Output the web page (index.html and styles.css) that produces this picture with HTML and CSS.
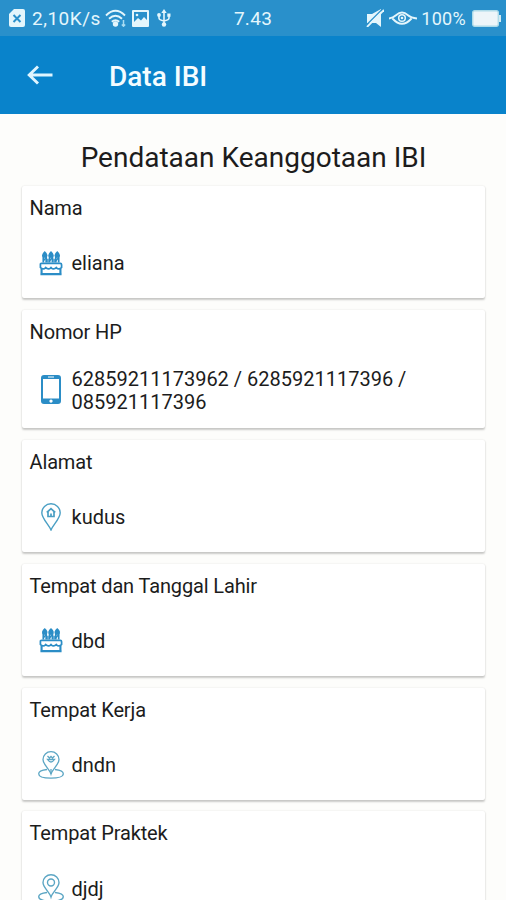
FILE: index.html
```html
<!DOCTYPE html>
<html lang="id">
<head>
<meta charset="utf-8">
<title>Data IBI</title>
<link rel="stylesheet" href="styles.css">
</head>
<body>
<svg class="defs" width="0" height="0">
  <symbol id="cake" viewBox="0 0 24 26">
    <g fill="none" stroke="currentColor" stroke-width="1.8">
      <path d="M2.200 24V18M21.800 24V18M1 24h22" stroke-width="2.200"/>
      <path d="M2.300 12.800h19.400q1.300 0 1.300 1.400v3q-2.700 3-5.500 0-2.700 3-5.500 0-2.800 3-5.500 0-2.800 3-5.500 0v-3q-.2-1.400 1.300-1.400z"/>
      <path d="M4 12V6h3v6M10.500 12V6h3v6M17 12V6h3v6"/>
      <path d="M4 10l3-3M10.500 10l3-3M17 10l3-3M8.800 12V8M15.200 12V8" stroke-width="1.500"/>
    </g>
    <path fill="currentColor" d="M5.500 0q-4.500 4-2 6.500h4q2.500-2.500-2-6.500zM12 0q-4.500 4-2 6.500h4q2.500-2.500-2-6.500zM18.500 0q-4.500 4-2 6.500h4q2.500-2.500-2-6.500z"/>
  </symbol>
  <symbol id="phone" viewBox="0 0 20 29">
    <path fill="currentColor" fill-rule="evenodd" d="M3 0h14q3 0 3 3v23q0 3-3 3H3q-3 0-3-3V3q0-3 3-3zM2 4v19.500h16V4zM7 1.600v1h6v-1zM10 24.500a1.600 1.600 0 1 0 .01 0z"/>
  </symbol>
  <symbol id="home-pin" viewBox="0 0 20 28">
    <path fill="none" stroke="currentColor" stroke-width="1.400" d="M10 27C8 22 .8 15.500 .8 9.800a9.200 9 0 0 1 18.400 0C19.200 15.500 12 22 10 27z"/>
    <path fill="none" stroke="currentColor" stroke-width="1.700" d="M5.800 9.500L10 5.700l4.200 3.800M7 8.800v4.700h6V8.800M10 13.500v-3"/>
  </symbol>
  <symbol id="place" viewBox="0 0 26 28">
    <g fill="none" stroke="currentColor" stroke-width="1.400">
      <path d="M13 23C11.500 18 5 13.500 5 8.500a8 7.800 0 0 1 16 0c0 5-6.500 9.500-8 14.500z"/>
      <path d="M9 18.500c-5 .6-8.300 2-8.300 4.200 0 2.700 5 4.500 12.300 4.500s12.300-1.800 12.300-4.500c0-2.200-3.300-3.600-8.300-4.200"/>
      <circle cx="13" cy="8.500" r="3.500"/>
    </g>
  </symbol>
  <symbol id="work-place" viewBox="0 0 26 28">
    <g fill="none" stroke="currentColor" stroke-width="1.300">
      <path d="M13 23C11.500 18 5 13.500 5 8.500a8 7.800 0 0 1 16 0c0 5-6.500 9.500-8 14.500z"/>
      <path d="M9 18.500c-5 .6-8.300 2-8.300 4.200 0 2.700 5 4.500 12.300 4.500s12.300-1.800 12.300-4.500c0-2.200-3.300-3.600-8.300-4.200M13 18v5"/>
      <path d="M9.500 5l2 2L13 5.500 14.500 7l2-2M9.500 8.500q3.500 5 7 0z"/>
    </g>
  </symbol>
</svg>

<div class="status">
  <div class="status-left">
    <svg class="sim" viewBox="0 0 16 18"><path fill="#e4f6fc" d="M5 0h9q2 0 2 2v14q0 2-2 2H2q-2 0-2-2V5z"/><path d="M4.500 6l7 7M11.500 6l-7 7" stroke="#2b91cb" stroke-width="2"/></svg>
    <span class="speed">2,10K/s</span>
    <svg class="wifi" viewBox="0 0 22 18"><g fill="none" stroke="#e4f6fc" stroke-width="1.900"><path d="M1 6.500Q10.500-3 20 6.500M4 9.800q6.500-6 13 0M6.800 12.800q3.700-3.300 7.400 0"/></g><circle cx="10.500" cy="15" r="2.700" fill="#e4f6fc"/><path d="M18.500 11v6M16.800 15.500l1.700 1.700 1.700-1.700" stroke="#a9dcf2" stroke-width="1.500" fill="none"/></svg>
    <svg class="photo" viewBox="0 0 17 17"><path fill="#e4f6fc" fill-rule="evenodd" d="M1 0h15q1 0 1 1v15q0 1-1 1H1q-1 0-1-1V1q0-1 1-1zM2 2v10l4-4 3 2.500L12 7l3 3V2z"/><circle cx="5" cy="5" r="1.300" fill="#e4f6fc"/></svg>
    <svg class="usb" viewBox="0 0 14 18"><path d="M7 2v13M2 6v3q0 2 5 3M12 6v3q0 2-5 3" stroke="#e4f6fc" stroke-width="1.600" fill="none"/><path fill="#e4f6fc" d="M7 0l2.700 4H4.300zM10.300 4.500h3.200v3.200h-3.200z"/><circle cx="2" cy="6" r="1.900" fill="#e4f6fc"/><circle cx="7" cy="15.500" r="2.200" fill="#e4f6fc"/></svg>
  </div>
  <span class="clock">7.43</span>
  <div class="status-right">
    <svg class="mute" viewBox="0 0 18 18"><path fill="#e4f6fc" d="M1 5h5l9-5v18l-5-4H1z"/><path d="M0 16.500L16.500 0" stroke="#2b91cb" stroke-width="1.300"/><path d="M1 18L18 1" stroke="#e4f6fc" stroke-width="1.800"/></svg>
    <svg class="eye" viewBox="0 0 28 14"><path d="M0 7.500Q4 7 7 4.300q6-5.400 12 0Q22 7 28 7.500M3.500 7.500Q13 18 22.500 7.500" stroke="#e4f6fc" stroke-width="1.900" fill="none"/><circle cx="13" cy="7" r="3.300" stroke="#e4f6fc" stroke-width="1.500" fill="none"/><circle cx="13" cy="7" r="1.300" fill="#e4f6fc"/></svg>
    <span class="percent">100%</span>
    <svg class="battery" viewBox="0 0 29 17"><rect x=".7" y=".7" width="25.600" height="15.600" rx="2" fill="#edf5f9" stroke="#aedbe9" stroke-width="1.400"/><path d="M27 5h2v7h-2z" fill="#d0eaf2"/></svg>
  </div>
</div>

<header class="toolbar">
  <svg class="back" viewBox="0 0 26 20"><path d="M25.500 10H2M11 1.500L2.200 10l8.800 8.500" fill="none" stroke="#dff5ff" stroke-width="2.900"/></svg>
  <h1 class="title">Data IBI</h1>
</header>

<main class="content">
  <h2 class="heading">Pendataan Keanggotaan IBI</h2>
  <section class="card">
    <div class="label">Nama</div>
    <div class="row"><span class="icon"><svg class="cake"><use href="#cake"/></svg></span><span class="value">eliana</span></div>
  </section>
  <section class="card">
    <div class="label">Nomor HP</div>
    <div class="row"><span class="icon"><svg class="phone"><use href="#phone"/></svg></span><span class="value">62859211173962 / 6285921117396 /<br>085921117396</span></div>
  </section>
  <section class="card">
    <div class="label">Alamat</div>
    <div class="row"><span class="icon"><svg class="home-pin"><use href="#home-pin"/></svg></span><span class="value">kudus</span></div>
  </section>
  <section class="card">
    <div class="label">Tempat dan Tanggal Lahir</div>
    <div class="row"><span class="icon"><svg class="cake"><use href="#cake"/></svg></span><span class="value">dbd</span></div>
  </section>
  <section class="card">
    <div class="label">Tempat Kerja</div>
    <div class="row"><span class="icon"><svg class="place"><use href="#work-place"/></svg></span><span class="value">dndn</span></div>
  </section>
  <section class="card">
    <div class="label">Tempat Praktek</div>
    <div class="row"><span class="icon"><svg class="place"><use href="#place"/></svg></span><span class="value">djdj</span></div>
  </section>
</main>
</body>
</html>
```
FILE: styles.css
```css
* { box-sizing: border-box; }
html, body { height: 100%; }
body {
  margin: 0;
  display: flex;
  flex-direction: column;
  overflow: hidden;
  background: #fdfdfb;
  color: #1c1c1c;
  font-family: Roboto, "Liberation Sans", sans-serif;
}
svg { display: block; flex: none; }
.defs { position: absolute; }

.status {
  flex: none;
  height: 36px;
  display: grid;
  grid-template-columns: 1fr auto 1fr;
  align-items: center;
  padding: 0 5px 0 9px;
  background: #2990cb;
  color: #e4f6fc;
  font-size: 19px;
  line-height: 35px;
}
.status-left, .status-right { display: flex; align-items: center; }
.status-right { justify-content: flex-end; }
.clock { margin-right: 4px; padding-top: 1px; letter-spacing: 0.3px; }
.speed { margin-left: 7px; padding-top: 1px; letter-spacing: 0.5px; }
.sim { width: 16px; height: 18px; }
.wifi { width: 22px; height: 18px; margin-left: 4px; }
.photo { width: 17px; height: 17px; margin-left: 5px; }
.usb { width: 14px; height: 18px; margin-left: 8px; }
.mute { width: 18px; height: 18px; }
.eye { width: 28px; height: 14px; margin-left: 5px; }
.percent { margin-left: 4px; font-size: 18px; letter-spacing: 0.3px; }
.battery { width: 29px; height: 17px; margin-left: 6px; }

.toolbar {
  flex: none;
  height: 78px;
  display: flex;
  align-items: center;
  padding-left: 27px;
  background: #0983cb;
}
.back { width: 26px; height: 20px; }
.title { margin: 4px 0 0 56px; font-size: 28px; font-weight: 500; line-height: 32px; color: #f4fcff; }

.content { flex: 1; min-height: 0; overflow: hidden; padding: 25px 21px 0 22px; }
.heading {
  margin: 0 0 9px;
  height: 38px;
  line-height: 38px;
  font-size: 28px;
  font-weight: 400;
  text-align: center;
}
.card {
  margin-bottom: 11.75px;
  padding: 10px 8px 14px 7.5px;
  background: #fff;
  border-radius: 2px;
  box-shadow: 0 1.5px 2px rgba(0, 0, 0, 0.2), 0 0 2px rgba(0, 0, 0, 0.08);
}
.label { height: 48px; font-size: 20px; line-height: 24px; letter-spacing: -0.14px; }
.row { display: flex; align-items: center; min-height: 40px; }
.icon { width: 42px; display: flex; justify-content: center; color: #2b8dc6; }
.value { font-size: 20px; line-height: 23.25px; }
.cake { width: 24px; height: 25px; margin-bottom: 2px; }
.phone { width: 20px; height: 29px; margin-bottom: 3px; }
.home-pin { width: 20px; height: 28px; margin-bottom: 2px; color: #4a9fc4; }
.place { width: 26px; height: 28px; margin-bottom: 2px; color: #5ca6c4; }
```
